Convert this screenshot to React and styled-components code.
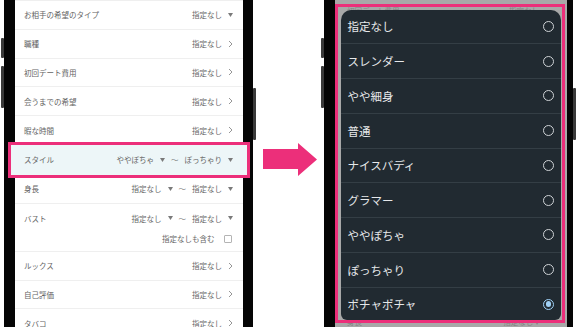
import React from 'react'
import styled, { createGlobalStyle } from 'styled-components'

const PINK = '#ec2f7a'

const GlobalStyle = createGlobalStyle`
  html, body {
    margin: 0;
    padding: 0;
    background: #ffffff;
  }
  body {
    width: 580px;
    height: 327px;
    overflow: hidden;
    font-family: "Noto Sans CJK JP", "Noto Sans", sans-serif;
  }
`

const conditions = [
  { label: 'お相手の希望のタイプ', kind: 'select', value: '指定なし' },
  { label: '職種', kind: 'link', value: '指定なし' },
  { label: '初回デート費用', kind: 'link', value: '指定なし' },
  { label: '会うまでの希望', kind: 'link', value: '指定なし' },
  { label: '暇な時間', kind: 'link', value: '指定なし' },
  { label: 'スタイル', kind: 'range', from: 'ややぽちゃ', to: 'ぽっちゃり', highlight: true },
  { label: '身長', kind: 'range', from: '指定なし', to: '指定なし' },
  { label: 'バスト', kind: 'range', from: '指定なし', to: '指定なし', check: '指定なしも含む' },
  { label: 'ルックス', kind: 'link', value: '指定なし' },
  { label: '自己評価', kind: 'link', value: '指定なし' },
  { label: 'タバコ', kind: 'link', value: '指定なし' },
]

const styleOptions = [
  '指定なし',
  'スレンダー',
  'やや細身',
  '普通',
  'ナイスバディ',
  'グラマー',
  'ややぽちゃ',
  'ぽっちゃり',
  'ポチャポチャ',
]

const Chevron = () => (
  <svg width='5' height='8' viewBox='0 0 5 8'>
    <path d='M1 1 L4 4 L1 7' fill='none' stroke='#8a8a8a' strokeWidth='0.9' />
  </svg>
)

const Tri = () => (
  <svg width='5' height='4' viewBox='0 0 5 4'>
    <polygon points='0,0 5,0 2.5,4' fill='#7a7a7a' />
  </svg>
)

const Value = ({ item }) => {
  if (item.kind === 'range') {
    return (
      <Values>
        <span>{item.from}</span>
        <Tri />
        <Tilde>〜</Tilde>
        <span>{item.to}</span>
        <Tri />
      </Values>
    )
  }

  return (
    <Values>
      <span>{item.value}</span>
      {item.kind === 'select' ? <Tri /> : <Chevron />}
    </Values>
  )
}

const ConditionRow = ({ item }) => {
  if (item.check) {
    return (
      <TallRow>
        <Line>
          <Label>{item.label}</Label>
          <Value item={item} />
        </Line>
        <CheckLine>
          <span>{item.check}</span>
          <CheckBox />
        </CheckLine>
      </TallRow>
    )
  }

  return (
    <Row highlight={item.highlight}>
      <Label>{item.label}</Label>
      <Value item={item} />
    </Row>
  )
}

const App = () => (
  <Stage>
    <GlobalStyle />
    <Phone left={4} right={10}>
      <Nub side='left' top={38} h={20} />
      <Nub side='left' top={66} h={42} />
      <Nub side='right' top={88} h={52} />
      <Screen>
        <List>
          {conditions.map(item => (
            <ConditionRow key={item.label} item={item} />
          ))}
        </List>
      </Screen>
    </Phone>

    <ArrowWrap>
      <svg width='54' height='33' viewBox='0 0 54 33'>
        <polygon points='0,6 35,6 35,0 54,16.5 35,33 35,26 0,26' fill={PINK} />
      </svg>
    </ArrowWrap>

    <Phone left={0} right={6}>
      <Nub side='left' top={38} h={20} />
      <Nub side='left' top={66} h={42} />
      <Nub side='right' top={88} h={52} />
      <DimScreen>
        <DimRow>
          <span>初回デート費用</span>
          <span>指定なし</span>
        </DimRow>
        <DimRow>
          <span>身長</span>
          <span>指定なし ▾</span>
        </DimRow>
        <Frame>
          <Sheet>
            {styleOptions.map((option, i) => (
              <Option key={option}>
                <span>{option}</span>
                <Radio checked={i === styleOptions.length - 1} />
              </Option>
            ))}
          </Sheet>
        </Frame>
      </DimScreen>
    </Phone>
  </Stage>
)

export default App

const Stage = styled.div`
  display: flex;
  align-items: stretch;
  width: 580px;
  height: 327px;
  overflow: hidden;
  background: #ffffff;
`

const Phone = styled.div`
  position: relative;
  flex-shrink: 0;
  display: flex;
  margin-left: ${props => props.left}px;
  padding: 0 ${props => props.right}px 0 11px;
  background: #050505;
`

const Nub = styled.span`
  position: absolute;
  ${props => props.side}: -3px;
  top: ${props => props.top}px;
  width: 3px;
  height: ${props => props.h}px;
  background: #3a3a3a;
  border-radius: 1px;
`

const Screen = styled.div`
  width: 228px;
  background: #ffffff;
`

const List = styled.div`
  display: flex;
  flex-direction: column;
  border-top: 1px solid #efefef;
  font-size: 7.5px;
  color: #666666;
`

const Row = styled.div`
  display: flex;
  align-items: center;
  justify-content: space-between;
  box-sizing: border-box;
  flex-shrink: 0;
  height: ${props => (props.highlight ? 36 : 28.8)}px;
  padding: 0 10px 0 9px;
  border-bottom: 1px solid #efefef;

  ${props => props.highlight && `
    position: relative;
    z-index: 1;
    margin: -3px -7px -3px;
    padding: 0 14px 0 13px;
    border: 3px solid ${PINK};
    background: #edf6f8;
  `}
`

const TallRow = styled.div`
  display: flex;
  flex-direction: column;
  box-sizing: border-box;
  height: 48px;
  padding: 0 10px 0 9px;
  border-bottom: 1px solid #efefef;
`

const Line = styled.div`
  display: flex;
  align-items: center;
  justify-content: space-between;
  height: 29px;
`

const CheckLine = styled.div`
  display: flex;
  align-items: center;
  justify-content: flex-end;
  gap: 9px;
  height: 12px;
  padding-right: 1px;
`

const CheckBox = styled.span`
  width: 6.5px;
  height: 6.5px;
  border: 1px solid #b4b4b4;
  border-radius: 1px;
  background: #ffffff;
`

const Label = styled.span`
  color: #636363;
`

const Values = styled.div`
  display: flex;
  align-items: center;
  gap: 6px;
  color: #676767;
`

const Tilde = styled.span`
  color: #777777;
`

const ArrowWrap = styled.div`
  flex-shrink: 0;
  display: flex;
  align-items: flex-start;
  width: 71px;
  padding: 143px 0 0 10px;
  box-sizing: border-box;
`

const DimScreen = styled.div`
  position: relative;
  display: flex;
  flex-direction: column;
  justify-content: space-between;
  width: 232px;
  background: #a8a8a8;
  font-size: 7.5px;
  color: #848484;
`

const DimRow = styled.div`
  display: flex;
  align-items: center;
  justify-content: space-between;
  height: 12px;
  padding: 4px 28px 0 12px;

  &:last-of-type {
    padding: 0 28px 0 12px;
    margin-bottom: -5px;
  }
`

const Frame = styled.div`
  position: absolute;
  top: 4px;
  left: 0;
  right: 2px;
  bottom: 4px;
  display: flex;
  padding: 2.5px 1.5px 0.5px 2.5px;
  border: 3.5px solid ${PINK};
`

const Sheet = styled.div`
  flex: 1;
  display: flex;
  flex-direction: column;
  overflow: hidden;
  border-radius: 10px 10px 6px 6px;
  background: #212a31;
`

const Option = styled.div`
  display: flex;
  align-items: center;
  justify-content: space-between;
  flex-shrink: 0;
  box-sizing: border-box;
  height: 34.75px;
  padding: 0 6.5px 0 7px;
  border-bottom: 1px solid #343e45;
  font-size: 11.5px;
  color: #e6e8ea;
`

const Radio = styled.span`
  position: relative;
  box-sizing: border-box;
  width: 11px;
  height: 11px;
  border-radius: 50%;
  border: 1.3px solid ${props => (props.checked ? '#9fd0f5' : '#cfd3d6')};

  &::after {
    content: '';
    display: ${props => (props.checked ? 'block' : 'none')};
    position: absolute;
    inset: 1.6px;
    border-radius: 50%;
    background: #9fd0f5;
  }
`
